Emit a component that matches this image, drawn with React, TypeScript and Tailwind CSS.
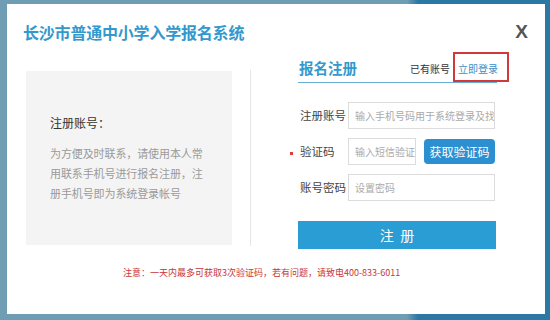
import React from 'react';

const FONT = { fontFamily: '"Noto Sans CJK SC", "Microsoft YaHei", sans-serif' };

const Field = ({ label, placeholder, width = 'w-[147px]', dot = false }: {
    label: string,
    placeholder: string,
    width?: string,
    dot?: boolean
}) => (
    <div className="flex items-center h-[27px]">
        <div className="relative w-[50px] pl-[2px] text-[11.5px] leading-[27px] text-[#444]">
            {dot && <span className="absolute left-[-8px] top-[14px] w-[3px] h-[3px] bg-[#e4393c]" />}
            {label}
        </div>
        <div className={`${width} h-[27px] border border-[#dcdcdc] bg-white overflow-hidden whitespace-nowrap pl-[6px] text-[10px] leading-[25px] text-[#aaa]`}>
            {placeholder}
        </div>
    </div>
);

export default function App() {
    return (
        <div
            className="w-[550px] h-[320px] pt-[4px] pl-[7px] overflow-hidden bg-[linear-gradient(90deg,#6f9db3_0%,#6f9db3_74%,#2b78a5_76%)]"
            style={FONT}
        >
            <div className="w-[538px] h-[310px] bg-white flex flex-col">
                {/* Header */}
                <div className="flex items-center justify-between pl-[16px] pr-[17px] pt-[16px] h-[40px]">
                    <h1 className="text-[16px] leading-[24px] font-bold text-[#3399cc] tracking-[-0.2px]">
                        长沙市普通中小学入学报名系统
                    </h1>
                    <span className="text-[19px] leading-[24px] font-bold text-[#555]" style={{ fontFamily: '"Liberation Sans", Arial, sans-serif' }}>
                        X
                    </span>
                </div>

                {/* Body */}
                <div className="flex items-start mt-[8px]">
                    {/* Left info panel */}
                    <div className="ml-[19px] mt-[19px] w-[206px] h-[174px] bg-[#f4f4f4] pl-[24px] pt-[43px]">
                        <div className="text-[12px] leading-[18px] text-[#333]">注册账号：</div>
                        <div className="mt-[11px] text-[11px] leading-[20px] text-[#9a9a9a] tracking-[-0.1px]">
                            <div>为方便及时联系，请使用本人常</div>
                            <div>用联系手机号进行报名注册，注</div>
                            <div>册手机号即为系统登录帐号</div>
                        </div>
                    </div>

                    <div className="ml-[18px] mt-[18px] w-px h-[176px] bg-[#e6e6e6]" />

                    {/* Right form */}
                    <div className="ml-[47px] w-[199px]">
                        <div className="flex items-center justify-between h-[31px] border-b border-[#6aaed6]">
                            <span className="pl-[1px] pt-[2px] text-[14.5px] leading-[20px] font-bold text-[#3399cc]">报名注册</span>
                            <div className="flex items-center mr-[-12px]">
                                <span className="pt-[2px] text-[10px] text-[#333] mr-[3px]">已有账号</span>
                                <div className="w-[56px] h-[30px] border-2 border-[#d0393b] pl-[3px] pt-[2px] flex items-center text-[10px] text-[#3a8fc8]">
                                    立即登录
                                </div>
                            </div>
                        </div>

                        <div className="mt-[19px] flex flex-col gap-[9px]">
                            <Field label="注册账号" placeholder="输入手机号码用于系统登录及找回" />
                            <div className="flex items-center">
                                <Field label="验证码" placeholder="输入短信验证" width="w-[68px]" dot />
                                <button className="ml-[8px] w-[71px] h-[25px] rounded-[4px] bg-[#2b8fd1] text-white text-[12px] leading-[25px]">
                                    获取验证码
                                </button>
                            </div>
                            <Field label="账号密码" placeholder="设置密码" />
                        </div>

                        <button className="mt-[20px] w-[198px] h-[28px] bg-[#2a9dd5] text-white text-[14px] leading-[28px]">
                            注&nbsp;&nbsp;册
                        </button>
                    </div>
                </div>

                {/* Note */}
                <div className="mt-[17px] pl-[116px] text-[9px] leading-[14px] text-[#c8363a] whitespace-nowrap">
                    注意：一天内最多可获取3次验证码，若有问题，请致电400-833-6011
                </div>
            </div>
        </div>
    );
}
